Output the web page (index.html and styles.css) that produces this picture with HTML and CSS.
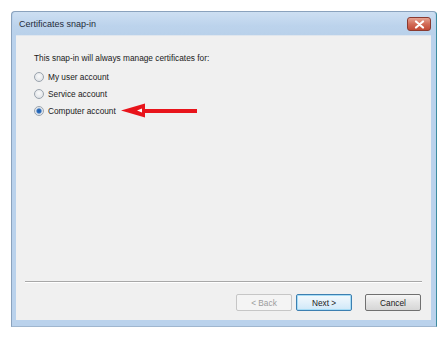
FILE: index.html
```html
<!DOCTYPE html>
<html>
<head>
<meta charset="utf-8">
<link rel="stylesheet" href="styles.css">
</head>
<body>
<div class="window">
  <div class="titlebar">
    <span class="title">Certificates snap-in</span>
    <button class="close" aria-label="Close">
      <svg width="11" height="9" viewBox="0 0 11 9"><path d="M2 1.5 L9 7.5 M9 1.5 L2 7.5" stroke="#fff" stroke-width="2.2" stroke-linecap="round"/></svg>
    </button>
  </div>
  <div class="panel">
    <div class="body">
      <p class="lead">This snap-in will always manage certificates for:</p>
      <label class="opt"><span class="radio"></span>My user account</label>
      <label class="opt"><span class="radio"></span>Service account</label>
      <label class="opt"><span class="radio checked"></span>Computer account
        <svg class="arrow" width="80" height="18" viewBox="0 0 80 18">
          <rect x="22" y="7" width="54" height="4" fill="#e8141b"/>
          <polygon points="0,8.5 24,1.5 24,15.5" fill="#e8141b"/>
          <polygon points="16,8.5 21,6.5 21,10.5" fill="#fff"/>
        </svg>
      </label>
    </div>
    <div class="sep"></div>
    <div class="buttons">
      <button class="btn disabled">&lt; Back</button>
      <button class="btn primary">Next &gt;</button>
      <button class="btn cancel">Cancel</button>
    </div>
  </div>
</div>
</body>
</html>
```
FILE: styles.css
```css
html, body { margin: 0; padding: 0; background: #fff; }
body { font-family: "Liberation Sans", Arial, sans-serif; font-size: 8.3px; color: #1a1a1a; }
.window {
  margin: 11px 0 0 11px;
  width: 426px;
  height: 316px;
  box-sizing: border-box;
  border: 1px solid #8aa2bd;
  border-right-color: #3d8ca0;
  border-bottom-color: #9fb6cf;
  border-radius: 4px 4px 0 0;
  background: #bad2ec;
  display: flex;
  flex-direction: column;
  padding: 0 5px 6px 4px;
}
.titlebar {
  height: 23px;
  display: flex;
  align-items: center;
  justify-content: space-between;
  margin: 0 -4px 0 -3px;
  padding: 0 4px 0 6px;
  background: linear-gradient(#cddff2, #bcd3ec 60%, #b9d1ea);
  border-radius: 3px 3px 0 0;
}
.title { font-size: 9px; color: #1f2b3a; }
.close {
  width: 24px; height: 14px;
  border: 1px solid #8a3a30;
  border-radius: 3px;
  background: linear-gradient(#e6a392, #d26b57 50%, #c24a36);
  display: flex; align-items: center; justify-content: center;
  padding: 0;
  margin-top: 1px;
}
.panel {
  flex: 1;
  background: #f0f0f0;
  display: flex;
  flex-direction: column;
  border-top: 1px solid #dfe6ee;
}
.body { flex: 1; padding: 17px 0 0 18px; }
.lead { margin: 0 0 5px; }
.opt { display: flex; align-items: center; height: 17px; gap: 4px; }
.radio {
  width: 8px; height: 8px;
  border-radius: 50%;
  border: 1px solid #9aa3ad;
  background: radial-gradient(circle at 50% 40%, #fafafa, #d9dde2);
}
.radio.checked {
  background: radial-gradient(circle, #1c5aa8 0, #2d6fc0 2px, #cfd8e3 3px, #eef1f4 4px);
}
.arrow { margin-left: 1px; }
.sep { height: 1px; background: #a8a8a8; margin: 0 9px 0 9px; border-bottom: 1px solid #fff; }
.buttons {
  display: flex;
  justify-content: flex-end;
  gap: 4px;
  padding: 11px 10px 9px 0;
}
.btn {
  width: 56px; height: 17px;
  font-family: inherit; font-size: 8.3px;
  border: 1px solid #707070;
  border-radius: 2px;
  background: linear-gradient(#f6f6f6, #e4e4e4 50%, #d6d6d6);
  color: #1a1a1a;
  padding: 0;
}
.btn.disabled { border-color: #c6c6c6; background: #f4f4f4; color: #9c9c9c; }
.btn.primary { border-color: #3c7fb1; box-shadow: inset 0 0 0 1px #a6dcf6; background: linear-gradient(#f2f9fd, #e3f1fb 50%, #cfe8f8); }
.btn.cancel { margin-left: 9px; }
```
